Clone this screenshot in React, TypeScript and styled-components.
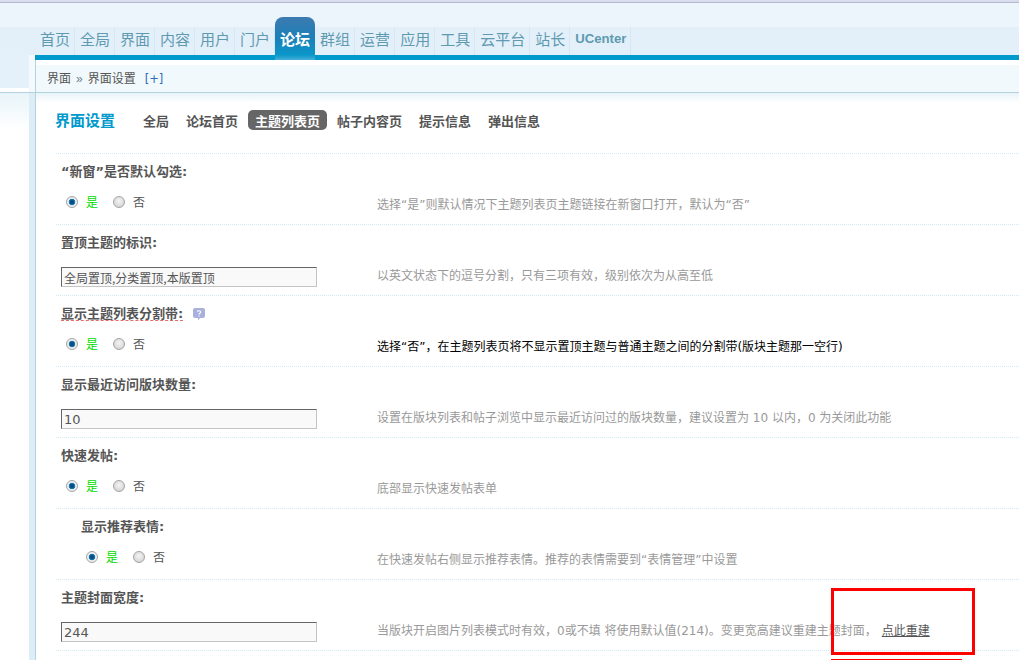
import React from "react";
import styled, { createGlobalStyle } from "styled-components";

const cjk = '"Noto Sans CJK SC", sans-serif';
const mixed = '"DejaVu Sans", "Noto Sans CJK SC", sans-serif';

const GlobalStyle = createGlobalStyle`
  html, body { margin: 0; padding: 0; background: #fff; height: 100%; overflow: hidden; }
  * { box-sizing: border-box; }
  body { font-family: ${cjk}; font-size: 12px; color: #555; }
`;

const Page = styled.div`
  width: 1019px;
  height: 660px;
  overflow: hidden;
  position: relative;
  background: #fff;
`;

const TopRule = styled.div`
  height: 3px;
  background: linear-gradient(#d8dcec 0 2px, #b4b9d0 2px);
`;

const Header = styled.header`
  height: 52px;
  background: linear-gradient(#ecf4fc 0 24px, #e3f0fa 24px);
  display: flex;
  align-items: flex-end;
  padding-left: 35px;
`;

const NavItem = styled.a<{ $active?: boolean; $latin?: boolean }>`
  height: 28px;
  padding: 3px 4px 0 5px;
  line-height: 18px;
  font-size: ${(p) => (p.$latin ? "13.2px" : "15px")};
  font-weight: ${(p) => (p.$latin ? 700 : 400)};
  font-family: ${(p) => (p.$latin ? '"Liberation Sans", sans-serif' : cjk)};
  color: #5f9ab0;
  white-space: nowrap;
  border-right: 1px solid #d6e6f2;
  ${(p) =>
    p.$active &&
    `
    position: relative;
    z-index: 1;
    width: 40px;
    height: 43px;
    margin-bottom: -5px;
    padding: 13px 0 0;
    border-right: 0;
    border-radius: 8px 8px 0 0;
    color: #fff;
    font-weight: 700;
    text-align: center;
    background: linear-gradient(#3c7ab0, #1a80b8 50%, #0a96c9 88%, #45b0d8);
  `}
`;

const BlueBar = styled.div`
  height: 5px;
  background: #0099cc;
  margin-left: 35px;
`;

const Layout = styled.div`
  display: flex;
  height: 600px;
`;

const Side = styled.aside`
  width: 35px;
  flex: none;
  display: flex;
  margin-top: -5px;
`;

const SidePanel = styled.div`
  width: 29px;
  background: linear-gradient(#e5f1fa 0 33px, #fff 33px 37px, #b3d2d9 37px 38px, #e8f4fa 38px, #fff 75px);
`;

const SideStrip = styled.div`
  width: 6px;
  background: linear-gradient(#f4f9fd 0 37px, #b3d2d9 37px 38px, #dcedf7 38px);
`;

const Main = styled.main`
  flex: 1;
  min-width: 0;
  border-left: 1px solid #b5d3dc;
`;

const Crumbs = styled.div`
  height: 33px;
  border-top: 5px solid #fff;
  border-bottom: 1px solid #b3d2d9;
  background: #f1f9fc;
  padding: 3px 0 0 11px;
  line-height: 20px;
  font-size: 12px;
  color: #555;
`;

const CrumbSep = styled.span`
  color: #6f7f95;
  margin: 0 5px;
  font-family: "Liberation Sans", sans-serif;
`;

const CrumbPlus = styled.span`
  color: #2b6cc0;
  margin-left: 9px;
  font-family: "DejaVu Sans", sans-serif;
  font-size: 11.5px;
`;

const Fade = styled.div`
  height: 60px;
  background: linear-gradient(#e8f3f9, #fff 10px);
  display: flex;
  align-items: flex-start;
  padding: 17px 0 0 19px;
`;

const PageTitle = styled.h1`
  margin: 0 21px 0 0;
  font-size: 15px;
  line-height: 20px;
  font-weight: 700;
  color: #0099cc;
  white-space: nowrap;
`;

const TabItem = styled.a<{ $active?: boolean }>`
  height: 20px;
  margin-right: 3px;
  padding: 0 7px;
  line-height: 21px;
  font-size: 13px;
  font-weight: 700;
  white-space: nowrap;
  border-radius: 5px;
  color: ${(p) => (p.$active ? "#fff" : "#555")};
  background: ${(p) => (p.$active ? "#666" : "transparent")};
`;

const Rows = styled.div`
  margin-left: 20px;
  border-top: 1px dotted #d2e9f6;
`;

const Row = styled.section`
  height: 71px;
  border-bottom: 1px dotted #d2e9f6;
`;

const Label = styled.div<{ $indent?: boolean }>`
  padding: 9px 0 0 ${(p) => (p.$indent ? "25px" : "5px")};
  height: 35px;
  line-height: 18px;
  font-family: ${mixed};
  font-size: 13px;
  font-weight: 700;
  color: #555;
  display: flex;
  align-items: flex-start;
`;

const Body = styled.div`
  display: flex;
  align-items: flex-start;
`;

const Control = styled.div<{ $indent?: boolean }>`
  width: 321px;
  flex: none;
  padding-left: ${(p) => (p.$indent ? "25px" : "5px")};
`;

const RadioGroup = styled.div`
  display: flex;
  align-items: center;
  margin-top: 4px;
  padding-left: 5px;
  height: 18px;
`;

const Radio = styled.span<{ $on?: boolean }>`
  width: 12px;
  height: 12px;
  flex: none;
  border-radius: 50%;
  border: 1px solid #a4a4a4;
  background: ${(p) =>
    p.$on
      ? "radial-gradient(circle, #0a4f86 0 1.8px, #1a86bd 3px, #eeeeee 3.6px)"
      : "radial-gradient(circle at 50% 40%, #f4f4f4, #cccccc)"};
`;

const Choice = styled.span<{ $on?: boolean }>`
  font-size: 12px;
  line-height: 18px;
  margin: 0 15px 0 8px;
  color: ${(p) => (p.$on ? "#00dd00" : "#555")};
`;

const Field = styled.div<{ $numeric?: boolean }>`
  width: 256px;
  height: 20px;
  margin-top: 7px;
  background: #f9f9f9;
  border: 1px solid;
  border-color: #666 #c4c4c4 #c4c4c4 #666;
  padding: 0 2px;
  line-height: 19px;
  font-family: ${(p) => (p.$numeric ? '"DejaVu Sans", sans-serif' : cjk)};
  font-size: ${(p) => (p.$numeric ? "13px" : "12px")};
  color: #555;
`;

const Hint = styled.div<{ $dark?: boolean }>`
  padding-top: 7px;
  font-family: ${mixed};
  font-size: 12px;
  line-height: 18px;
  white-space: nowrap;
  color: ${(p) => (p.$dark ? "#000" : "#999")};
`;

const Rebuild = styled.a`
  color: #555;
  text-decoration: underline;
  margin-left: 5px;
`;

const Squiggle = styled.span`
  text-decoration: underline dashed #e86a6a 1px;
  text-underline-offset: 2px;
`;

const HelpIcon = styled.svg`
  width: 14px;
  height: 14px;
  margin: 2px 0 0 9px;
`;

const RedBox = styled.div`
  position: absolute;
  left: 831px;
  top: 588px;
  width: 144px;
  height: 67px;
  border: 3px solid #ff0000;
`;

const RedLine = styled.div`
  position: absolute;
  left: 831px;
  top: 659px;
  width: 131px;
  height: 1px;
  background: #ff0000;
`;

const navItems = ["首页", "全局", "界面", "内容", "用户", "门户", "论坛", "群组", "运营", "应用", "工具", "云平台", "站长", "UCenter"];
const tabs = ["全局", "论坛首页", "主题列表页", "帖子内容页", "提示信息", "弹出信息"];

type RowData = {
  label: React.ReactNode;
  value?: string;
  hint: React.ReactNode;
  indent?: boolean;
  dark?: boolean;
};

const rows: RowData[] = [
  { label: "“新窗”是否默认勾选:", hint: "选择“是”则默认情况下主题列表页主题链接在新窗口打开，默认为“否”" },
  { label: "置顶主题的标识:", value: "全局置顶,分类置顶,本版置顶", hint: "以英文状态下的逗号分割，只有三项有效，级别依次为从高至低" },
  {
    label: (
      <>
        <Squiggle>显示主题列表分割带:</Squiggle>
        <HelpIcon viewBox="0 0 14 14">
          <path d="M3 1h8a2 2 0 0 1 2 2v6a2 2 0 0 1-2 2H8l-2 2.500V11H3a2 2 0 0 1-2-2V3a2 2 0 0 1 2-2z" fill="#a9b0de" />
          <path d="M5.300 4.600c.2-1 3.400-1.300 3.400.5 0 1.200-1.700 1.200-1.700 2.400M7 8.500v1" stroke="#fff" strokeWidth="1.100" fill="none" />
        </HelpIcon>
      </>
    ),
    hint: "选择“否”，在主题列表页将不显示置顶主题与普通主题之间的分割带(版块主题那一空行)",
    dark: true,
  },
  { label: "显示最近访问版块数量:", value: "10", hint: "设置在版块列表和帖子浏览中显示最近访问过的版块数量，建议设置为 10 以内，0 为关闭此功能" },
  { label: "快速发帖:", hint: "底部显示快速发帖表单" },
  { label: "显示推荐表情:", indent: true, hint: "在快速发帖右侧显示推荐表情。推荐的表情需要到“表情管理”中设置" },
  {
    label: "主题封面宽度:",
    value: "244",
    hint: (
      <>
        当版块开启图片列表模式时有效，0或不填 将使用默认值(214)。变更宽高建议重建主题封面，<Rebuild>点此重建</Rebuild>
      </>
    ),
  },
];

export default function App() {
  return (
    <Page>
      <GlobalStyle />
      <TopRule />
      <Header>
        {navItems.map((n) => (
          <NavItem key={n} $active={n === "论坛"} $latin={n === "UCenter"}>
            {n}
          </NavItem>
        ))}
      </Header>
      <BlueBar />
      <Layout>
        <Side>
          <SidePanel />
          <SideStrip />
        </Side>
        <Main>
          <Crumbs>
            界面<CrumbSep>»</CrumbSep>界面设置<CrumbPlus>[+]</CrumbPlus>
          </Crumbs>
          <Fade>
            <PageTitle>界面设置</PageTitle>
            {tabs.map((t) => (
              <TabItem key={t} $active={t === "主题列表页"}>
                {t}
              </TabItem>
            ))}
          </Fade>
          <Rows>
            {rows.map((r, i) => (
              <Row key={i}>
                <Label $indent={r.indent}>{r.label}</Label>
                <Body>
                  <Control $indent={r.indent}>
                    {r.value ? (
                      <Field $numeric={/^\d+$/.test(r.value)}>{r.value}</Field>
                    ) : (
                      <RadioGroup>
                        <Radio $on />
                        <Choice $on>是</Choice>
                        <Radio />
                        <Choice>否</Choice>
                      </RadioGroup>
                    )}
                  </Control>
                  <Hint $dark={r.dark}>{r.hint}</Hint>
                </Body>
              </Row>
            ))}
          </Rows>
        </Main>
      </Layout>
      <RedBox />
      <RedLine />
    </Page>
  );
}
